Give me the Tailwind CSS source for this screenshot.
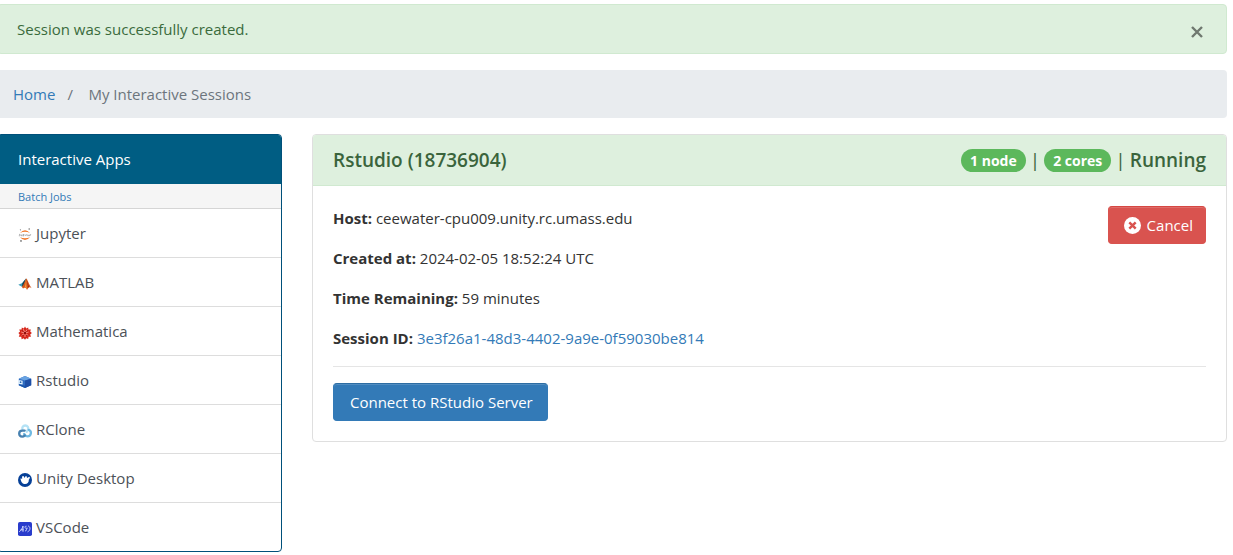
<!DOCTYPE html>
<html lang="en">
<head>
<meta charset="utf-8">
<title>My Interactive Sessions</title>
<script src="https://cdn.jsdelivr.net/npm/@tailwindcss/browser@4"></script>
</head>
<body class="overflow-x-hidden bg-white font-['Open_Sans','Noto_Sans',sans-serif] text-[15px] leading-6 text-[#333]">
<div class="-ml-[3px] mr-[6px] flex flex-col gap-4 pt-1">
  <div role="alert" class="flex h-[50px] items-center justify-between rounded border border-[#d0e9d0] bg-[#def0de] pl-[19px] pr-[21px] text-[#3a6b3c]">
    <span>Session was successfully created.</span>
    <button type="button" aria-label="Close" class="mt-[6px] flex size-4 items-center justify-center text-[#6f786f]">
      <svg class="size-[14px]" viewBox="0 0 14 14" fill="none" stroke="currentColor" stroke-width="2.4"><path d="M2 2l10 10M12 2L2 12"/></svg>
    </button>
  </div>
  <nav aria-label="Breadcrumb" class="rounded bg-[#e9ecef] px-4 py-3 text-[#6c757d]">
    <ol class="flex">
      <li><a href="#" class="text-[#337ab7]">Home</a></li>
      <li class="flex"><span class="w-[33px] pl-3" aria-hidden="true">/</span>My Interactive Sessions</li>
    </ol>
  </nav>
  <div class="grid grid-cols-4 items-start gap-[30px]">
    <aside class="overflow-hidden rounded border border-[#00507a] bg-white">
      <h2 class="h-[49px] bg-[#005d83] px-5 py-3 font-medium text-white">Interactive Apps</h2>
      <p class="h-[25px] border-b border-[#d5d5d5] bg-[#f5f5f5] px-5 text-[11px] leading-[26px] text-[#337ab7]">Batch Jobs</p>
      <ul class="divide-y divide-[#dddddd] text-[#4c5157]">
        <li><a href="#" class="flex h-12 items-center gap-1 px-5">
          <svg class="mt-1 size-[14px]" viewBox="0 0 14 14"><path d="M2 4.9Q7 -.6 12 4.9Q7 2.6 2 4.9zM2 9.2Q7 14.7 12 9.2Q7 11.5 2 9.2z" fill="#f37726"/><path d="M1 6.4h1v1.4H.8M3 6.5v1.2h1V6.5M5 8.4V6.5h1v1.2H5M7 6.5l.7 1.2.6-1.2M9 6v1.7h.8M10.5 7h1v.8h-1zM12.3 7.8V6.5h.8" fill="none" stroke="#858585" stroke-width=".55"/><circle cx="2.4" cy="1.8" r=".6" fill="#777"/><circle cx="11.2" cy="1" r=".8" fill="#777"/><circle cx="3" cy="12.9" r=".9" fill="#777"/></svg>Jupyter</a></li>
        <li><a href="#" class="flex h-12 items-center gap-1 px-5">
          <svg class="mt-1 size-[14px]" viewBox="0 0 14 14"><path d="M.3 7.8L4.4 6l1.7-2.3L8 1.6 5.7 10.8 3.8 9.7z" fill="#3e9fba"/><path d="M4.4 6L8 1.6 5.8 9 4 9.6z" fill="#174352"/><path d="M3.8 9.7C5 9.2 6 6.6 8.1 1.6c1.4.4 2.6 5.7 5.5 9.6-1.8-1.7-3-1.4-4.6 1.7-.6-1.3-1-2.2-2-2.2-.8 0-1.5.8-2 .7z" fill="#d4561c"/><path d="M8.1 1.6c.4 2.7-.2 6.8.7 10.4-.7-1.4-1.1-1.8-2.1-1.4C7.6 8.2 7.8 5.2 8.1 1.6z" fill="#f5a33b"/><path d="M8.2 1.6l1.7 6.7-.2 2.8 1.2-1.4z" fill="#8e1912"/></svg>MATLAB</a></li>
        <li><a href="#" class="flex h-12 items-center gap-1 px-5">
          <svg class="mt-1 size-[14px]" viewBox="0 0 14 14"><path d="M7 .4l1.2 2 2-1 .2 2.2 2.5-.1-.7 2.1 1.7 1.4-1.7 1.4.8 2.3-2.4.1-.4 2.3-2-.9L7 13.8l-1.3-1.6-2.1 1-.3-2.4-2.5-.1.9-2.2L.4 7l1.7-1.6-.9-2 2.4.2.2-2.2 2 1z" fill="#d6271c"/><path d="M7 7L5.3 3.2M7 7l2-3.5M7 7l3.6-1M7 7l3.2 2.5M7 7v4M7 7l-3.3 2.4M7 7L3.2 6" stroke="#ffaaa0" stroke-width=".8"/><circle cx="7" cy="7" r="1.2" fill="#8f0c0c"/><path d="M4.2 4.7l1.2.8M9.3 4.8L8.5 6M8.5 9l.8 1M5.4 9l-.9 1" stroke="#8f0c0c" stroke-width=".8"/></svg>Mathematica</a></li>
        <li><a href="#" class="flex h-12 items-center gap-1 px-5">
          <svg class="mt-1 size-[14px]" viewBox="0 0 14 14"><path d="M.8 3.8L7 .9l6.2 2.9v6.4L7 13.1.8 10.2z" fill="#2f6cc0"/><path d="M.8 3.8L7 .9l6.2 2.9L7 5.6z" fill="#69a3e2"/><path d="M7 5.6l6.2-1.8v6.4L7 13.1z" fill="#1d4ea6"/><path d="M.8 9.4l6.2 1.4v2.3L.8 10.2z" fill="#1a56ab"/><path d="M.4 5l4.2.8v3.6L.4 8.8z" fill="#e4f3ff"/><circle cx="2.6" cy="7.2" r=".9" fill="#2769b2"/></svg>Rstudio</a></li>
        <li><a href="#" class="flex h-12 items-center gap-1 px-5">
          <svg class="mt-1 size-[14px]" viewBox="0 0 14 14" fill="none" stroke-width="2.3" stroke-linecap="round"><path d="M4.5 5.7C3.8 3.2 5.1 1.5 7.2 1.5c2.4 0 3.8 2.3 2.7 4.3L8.8 7.7" stroke="#b4e2f5"/><path d="M10.8 5.9c1.5.5 2.2 1.8 2.1 3.1-.2 2.1-1.7 3.4-3.5 3.4-1.6 0-2.4-.9-3.3-2.5" stroke="#70bae3"/><path d="M6.7 6.6H4.3C2.2 6.6 1.2 7.9 1.2 9.6c0 1.8 1.1 3 3 3 1 0 1.8-.4 2.5-1.2" stroke="#4781b0"/></svg>RClone</a></li>
        <li><a href="#" class="flex h-12 items-center gap-1 px-5">
          <svg class="mt-1 size-[14px]" viewBox="0 0 14 14"><circle cx="7" cy="7" r="7" fill="#064097"/><path d="M2.4 5.6l1.8.2-.2-2.4 1.5-.3 1.2 2 .7-1.9 1.3.1.3 1.6 2.3-1.2.7 1-1.2 2.1c.2 2.5-1.3 4.3-3.7 4.3-2.2 0-3.8-1.2-4.7-5.5z" fill="#fff"/></svg>Unity Desktop</a></li>
        <li><a href="#" class="flex h-12 items-center gap-1 px-5">
          <svg class="mt-1 size-[14px]" viewBox="0 0 14 14"><rect width="14" height="14" rx="1.8" fill="#293ccc"/><path d="M1.2 9.8C3 8.6 4.3 6.5 5 4v5.8M2.5 7.8h3.1M8.5 4.2c-1.6-.3-2 1.3-.8 2 .9.5 1.4 2.7-.6 2.8M8.2 6.2h1.5M10.2 3.9c2.5 1 2.4 4.5-.6 6" fill="none" stroke="#dce2ff" stroke-width=".9"/></svg>VSCode</a></li>
      </ul>
    </aside>
    <main class="col-span-3 overflow-hidden rounded border border-[#dfdfdf] bg-white">
      <header class="flex h-[51px] items-center justify-between border-b border-[#d0e9d0] bg-[#def0de] px-5 text-[19px] font-semibold text-[#3a643c]">
        <h1>Rstudio (18736904)</h1>
        <div class="flex items-center gap-1">
          <span class="rounded-full bg-[#5cb85c] px-[9px] text-sm leading-[23px] font-bold text-white">1 node</span>
          <span class="font-normal">|</span>
          <span class="rounded-full bg-[#5cb85c] px-[9px] text-sm leading-[23px] font-bold text-white">2 cores</span>
          <span class="font-normal">|</span>
          <span>Running</span>
        </div>
      </header>
      <div class="p-5">
        <div class="flex items-start justify-between">
          <div class="flex flex-col gap-4">
            <p><strong>Host:</strong> ceewater-cpu009.unity.rc.umass.edu</p>
            <p><strong>Created at:</strong> 2024-02-05 18:52:24 UTC</p>
            <p><strong>Time Remaining:</strong> 59 minutes</p>
            <p><strong>Session ID:</strong> <a href="#" class="text-[#337ab7]">3e3f26a1-48d3-4402-9a9e-0f59030be814</a></p>
          </div>
          <button type="button" class="flex h-[38px] items-center gap-[6px] rounded border border-[#d9534f] border-t-[#d64742] bg-[#d9534f] pr-3 pl-[15px] text-white shadow-[inset_0_1px_0_rgba(255,255,255,0.15)]">
            <svg class="size-[17px]" viewBox="0 0 16 16"><circle cx="8" cy="8" r="8" fill="#fff"/><path d="M5 5l6 6M11 5l-6 6" stroke="#d9534f" stroke-width="2.3"/></svg>Cancel</button>
        </div>
        <hr class="my-4 border-[#e5e5e5]">
        <button type="button" class="block h-[38px] rounded border border-[#337ab7] border-t-[#2d6da3] bg-[#337ab7] pl-4 pr-[14px] text-white shadow-[inset_0_1px_0_rgba(255,255,255,0.15)]">Connect to RStudio Server</button>
      </div>
    </main>
  </div>
</div>
</body>
</html>
